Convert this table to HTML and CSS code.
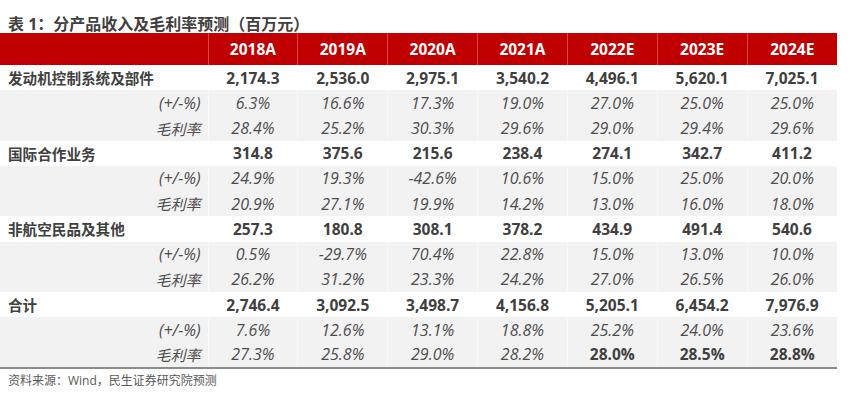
FILE: index.html
```html
<!DOCTYPE html>
<html lang="zh-CN">
<head>
<meta charset="utf-8">
<title>分产品收入及毛利率预测</title>
<link rel="stylesheet" href="styles.css">
</head>
<body>
<div class="page">
  <h1 class="title">表 1：分产品收入及毛利率预测（百万元）</h1>
  <table class="data">
    <colgroup>
      <col class="c-label">
      <col><col><col><col><col><col><col>
    </colgroup>
    <thead>
      <tr class="head">
        <th></th><th>2018A</th><th>2019A</th><th>2020A</th><th>2021A</th><th>2022E</th><th>2023E</th><th>2024E</th>
      </tr>
    </thead>
    <tbody>
      <tr class="main"><td class="name">发动机控制系统及部件</td><td>2,174.3</td><td>2,536.0</td><td>2,975.1</td><td>3,540.2</td><td>4,496.1</td><td>5,620.1</td><td>7,025.1</td></tr>
      <tr class="sub"><td class="lbl">(+/-%)</td><td>6.3%</td><td>16.6%</td><td>17.3%</td><td>19.0%</td><td>27.0%</td><td>25.0%</td><td>25.0%</td></tr>
      <tr class="sub"><td class="lbl cn">毛利率</td><td>28.4%</td><td>25.2%</td><td>30.3%</td><td>29.6%</td><td>29.0%</td><td>29.4%</td><td>29.6%</td></tr>

      <tr class="main"><td class="name">国际合作业务</td><td>314.8</td><td>375.6</td><td>215.6</td><td>238.4</td><td>274.1</td><td>342.7</td><td>411.2</td></tr>
      <tr class="sub"><td class="lbl">(+/-%)</td><td>24.9%</td><td>19.3%</td><td>-42.6%</td><td>10.6%</td><td>15.0%</td><td>25.0%</td><td>20.0%</td></tr>
      <tr class="sub"><td class="lbl cn">毛利率</td><td>20.9%</td><td>27.1%</td><td>19.9%</td><td>14.2%</td><td>13.0%</td><td>16.0%</td><td>18.0%</td></tr>

      <tr class="main"><td class="name">非航空民品及其他</td><td>257.3</td><td>180.8</td><td>308.1</td><td>378.2</td><td>434.9</td><td>491.4</td><td>540.6</td></tr>
      <tr class="sub"><td class="lbl">(+/-%)</td><td>0.5%</td><td>-29.7%</td><td>70.4%</td><td>22.8%</td><td>15.0%</td><td>13.0%</td><td>10.0%</td></tr>
      <tr class="sub"><td class="lbl cn">毛利率</td><td>26.2%</td><td>31.2%</td><td>23.3%</td><td>24.2%</td><td>27.0%</td><td>26.5%</td><td>26.0%</td></tr>

      <tr class="main"><td class="name">合计</td><td>2,746.4</td><td>3,092.5</td><td>3,498.7</td><td>4,156.8</td><td>5,205.1</td><td>6,454.2</td><td>7,976.9</td></tr>
      <tr class="sub"><td class="lbl">(+/-%)</td><td>7.6%</td><td>12.6%</td><td>13.1%</td><td>18.8%</td><td>25.2%</td><td>24.0%</td><td>23.6%</td></tr>
      <tr class="sub last"><td class="lbl cn">毛利率</td><td>27.3%</td><td>25.8%</td><td>29.0%</td><td>28.2%</td><td class="strong">28.0%</td><td class="strong">28.5%</td><td class="strong">28.8%</td></tr>
    </tbody>
  </table>
  <p class="source">资料来源：Wind，民生证券研究院预测</p>
</div>
</body>
</html>
```

FILE: styles.css
```css
* { box-sizing: border-box; }

html, body {
  margin: 0;
  padding: 0;
  background: #ffffff;
}

body {
  font-family: "Open Sans", "Noto Sans CJK SC", sans-serif;
  color: #404040;
  width: 854px;
  height: 403px;
  overflow: hidden;
}

.page {
  padding-top: 15px;
}

.title {
  margin: 0;
  padding-left: 8px;
  height: 18px;
  font-size: 16px;
  line-height: 18px;
  font-weight: 700;
  color: #404040;
  white-space: nowrap;
}

.data {
  width: 837px;
  border-collapse: collapse;
  table-layout: fixed;
  border-bottom: 2px solid #8c8c8c;
}

.c-label { width: 208px; }

.data th,
.data td {
  padding: 0;
  text-align: center;
  white-space: nowrap;
}

.head {
  height: 32px;
  background: #c00000;
}

.head th {
  color: #ffffff;
  font-size: 15.5px;
  font-weight: 700;
  border-left: 1px solid #d84545;
  line-height: 32px;
}

.head th:first-child { border-left: none; }

.main {
  height: 25.25px;
  background: #ffffff;
}

.main td {
  font-size: 15.5px;
  font-weight: 700;
  color: #404040;
}

.main td.name {
  text-align: left;
  padding-left: 8px;
  font-size: 14.6px;
}

.sub {
  height: 25.2px;
  background: #f2f2f2;
}

.sub td {
  font-size: 16px;
  font-style: italic;
  font-weight: 400;
  color: #4d4d4d;
  border-left: 1px solid #f8f8f8;
}

.sub td:first-child { border-left: none; }

.sub td.lbl {
  text-align: right;
  padding-right: 7px;
}

.sub td.cn {
  font-size: 15px;
}

.sub td.strong {
  font-style: normal;
  font-weight: 700;
  font-size: 15.5px;
  color: #404040;
}

.source {
  margin: 0;
  padding: 3px 0 0 8px;
  font-size: 12px;
  line-height: 18px;
  color: #595959;
  white-space: nowrap;
}
```
